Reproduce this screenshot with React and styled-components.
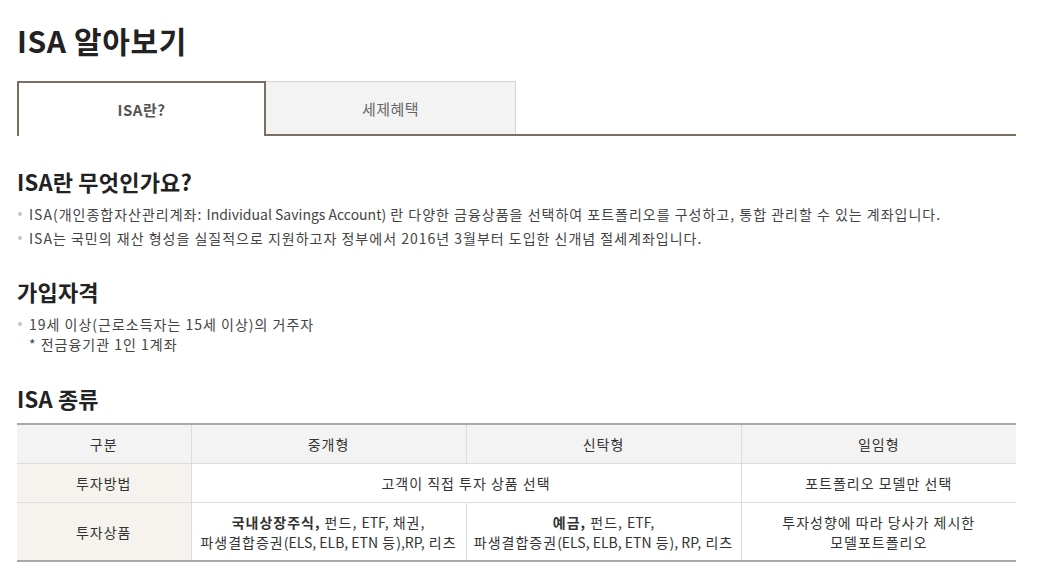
import React from "react";
import styled, { createGlobalStyle } from "styled-components";

const Global = createGlobalStyle`
  html, body { margin: 0; padding: 0; background: #fff; }
  body { font-family: "Noto Sans CJK KR", "Noto Sans", sans-serif; color: #333; }
`;

const Page = styled.div`
  padding: 18px 22px 0 17px;
  width: 999px;
`;

const Title = styled.h1`
  margin: 0;
  font-size: 30px;
  font-weight: 700;
  line-height: 44px;
  color: #222;
  letter-spacing: 0.6px;
`;

const Tabs = styled.div`
  display: flex;
  margin-top: 19px;
  border-bottom: 2px solid #7b6e63;
`;

const Tab = styled.div`
  width: ${(p) => (p.$active ? "245px" : "249px")};
  height: ${(p) => (p.$active ? "53px" : "52px")};
  margin-bottom: ${(p) => (p.$active ? "-2px" : "0")};
  display: flex;
  align-items: center;
  justify-content: center;
  font-size: 15px;
  letter-spacing: 0.5px;
  box-sizing: content-box;
  background: ${(p) => (p.$active ? "#fff" : "#f3f3f3")};
  color: ${(p) => (p.$active ? "#555" : "#666")};
  font-weight: ${(p) => (p.$active ? 700 : 400)};
  border: ${(p) => (p.$active ? "2px solid #7b6e63" : "1px solid #d4d4d4")};
  border-bottom: none;
  ${(p) => !p.$active && "border-left: none;"}
`;

const Section = styled.section`
  margin-top: ${(p) => p.$top || "32px"};
`;

const H2 = styled.h2`
  margin: 0;
  font-size: 22px;
  font-weight: 700;
  line-height: 30px;
  color: #222;
  letter-spacing: 0.2px;
`;

const List = styled.ul`
  margin: ${(p) => p.$mt || "4px"} 0 0;
  padding: 0;
  list-style: none;
`;

const Item = styled.li`
  position: relative;
  padding-left: 12px;
  font-size: 14px;
  letter-spacing: 1px;
  line-height: ${(p) => p.$lh || "24px"};
  color: #444;
  &::before {
    content: "";
    position: absolute;
    left: 1px;
    top: calc(${(p) => p.$lh || "24px"} / 2 - 2px);
    width: 4px;
    height: 4px;
    border-radius: 50%;
    background: #c4c4c4;
  }
`;

const Latin = styled.span`
  letter-spacing: 0;
`;

const Note = styled.div`
  padding-left: 12px;
  font-size: 14px;
  letter-spacing: 1px;
  line-height: 20px;
  color: #444;
`;

const Table = styled.table`
  width: 100%;
  margin-top: 10px;
  border-collapse: collapse;
  table-layout: fixed;
  border-top: 2px solid #a9a9a9;
  border-bottom: 2px solid #a9a9a9;
  font-size: 14px;
  letter-spacing: 1px;
  color: #333;
`;

const Th = styled.th`
  height: 38px;
  background: #f3f3f3;
  font-weight: 400;
  border-bottom: 1px solid #dcdcdc;
  border-left: 1px solid #dcdcdc;
  &:first-child { border-left: none; }
  padding: 0;
`;

const RowHead = styled.td`
  background: #f6f3ee;
  text-align: center;
  border-bottom: ${(p) => (p.$last ? "none" : "1px solid #dcdcdc")};
  padding: 0;
`;

const Td = styled.td`
  height: ${(p) => p.$h || "38px"};
  text-align: center;
  line-height: 20px;
  border-bottom: ${(p) => (p.$last ? "none" : "1px solid #dcdcdc")};
  border-left: 1px solid #dcdcdc;
  padding: 0;
`;

const B = styled.b`
  font-weight: 700;
`;

export default function App() {
  return (
    <>
      <Global />
      <Page>
        <Title>ISA 알아보기</Title>
        <Tabs>
          <Tab $active>ISA란?</Tab>
          <Tab>세제혜택</Tab>
        </Tabs>

        <Section $top="30px">
          <H2>ISA란 무엇인가요?</H2>
          <List $mt="6px">
            <Item>
              ISA(개인종합자산관리계좌: <Latin>Individual Savings Account)</Latin> 란 다양한 금융상품을 선택하여 포트폴리오를 구성하고, 통합 관리할 수 있는 계좌입니다.
            </Item>
            <Item>ISA는 국민의 재산 형성을 실질적으로 지원하고자 정부에서 2016년 3월부터 도입한 신개념 절세계좌입니다.</Item>
          </List>
        </Section>

        <Section $top="26px">
          <H2>가입자격</H2>
          <List $mt="8px">
            <Item $lh="20px">19세 이상(근로소득자는 15세 이상)의 거주자</Item>
          </List>
          <Note>* 전금융기관 1인 1계좌</Note>
        </Section>

        <Section $top="29px">
          <H2>ISA 종류</H2>
          <Table>
            <colgroup>
              <col style={{ width: "174px" }} />
              <col />
              <col />
              <col />
            </colgroup>
            <thead>
              <tr>
                <Th>구분</Th>
                <Th>중개형</Th>
                <Th>신탁형</Th>
                <Th>일임형</Th>
              </tr>
            </thead>
            <tbody>
              <tr>
                <RowHead>투자방법</RowHead>
                <Td colSpan={2}>고객이 직접 투자 상품 선택</Td>
                <Td>포트폴리오 모델만 선택</Td>
              </tr>
              <tr>
                <RowHead $last>투자상품</RowHead>
                <Td $h="57px" $last>
                  <B>국내상장주식,</B> 펀드, <Latin>ETF,</Latin> 채권,
                  <br />
                  파생결합증권<Latin>(ELS, ELB, ETN</Latin> 등<Latin>),RP,</Latin> 리츠
                </Td>
                <Td $h="57px" $last>
                  <B>예금,</B> 펀드, <Latin>ETF,</Latin>
                  <br />
                  파생결합증권<Latin>(ELS, ELB, ETN</Latin> 등<Latin>), RP,</Latin> 리츠
                </Td>
                <Td $h="57px" $last>
                  투자성향에 따라 당사가 제시한
                  <br />
                  모델포트폴리오
                </Td>
              </tr>
            </tbody>
          </Table>
        </Section>
      </Page>
    </>
  );
}
